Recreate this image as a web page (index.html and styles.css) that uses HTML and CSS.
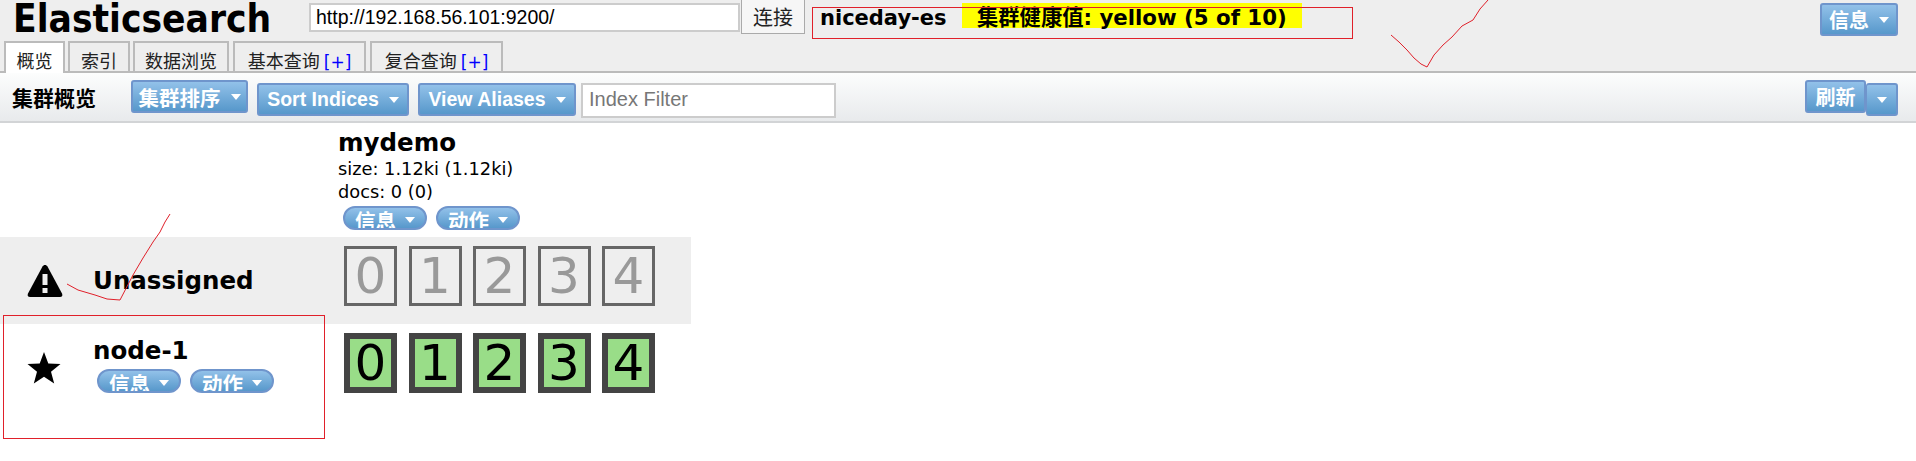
FILE: index.html
```html
<!DOCTYPE html>
<html lang="zh">
<head>
<meta charset="utf-8">
<title>Elasticsearch</title>
<link rel="stylesheet" href="styles.css">
</head>
<body>
<header class="top">
  <h1 class="brand">Elasticsearch</h1>
  <input class="url" value="http://192.168.56.101:9200/">
  <button class="connect">连接</button>
  <span class="cluster-name">niceday-es</span>
  <span class="health">集群健康值: yellow (5 of 10)</span>
  <button class="btn info-top">信息<i class="caret"></i></button>
</header>
<nav class="tabs">
  <span class="tab tab-active t1">概览</span>
  <span class="tab t2">索引</span>
  <span class="tab t3">数据浏览</span>
  <span class="tab t4">基本查询 <b class="plus">[+]</b></span>
  <span class="tab t5">复合查询 <b class="plus">[+]</b></span>
</nav>
<section class="toolbar">
  <strong class="tool-title">集群概览</strong>
  <button class="btn sort pressed">集群排序<i class="caret"></i></button>
  <button class="btn indices">Sort Indices<i class="caret"></i></button>
  <button class="btn aliases">View Aliases<i class="caret"></i></button>
  <input class="filter" placeholder="Index Filter">
  <span class="spring"></span>
  <button class="btn refresh pressed">刷新</button>
  <button class="btn refresh-more"><i class="caret"></i></button>
</section>
<main class="overview">
  <div class="row head-row">
    <div class="side"></div>
    <div class="index">
      <h2 class="index-name">mydemo</h2>
      <div class="stat">size: 1.12ki (1.12ki)</div>
      <div class="stat">docs: 0 (0)</div>
      <div class="pills">
        <span class="pill">信息<i class="caret"></i></span>
        <span class="pill">动作<i class="caret"></i></span>
      </div>
    </div>
  </div>
  <div class="row grey-row">
    <div class="side side-center">
      <svg class="icon warn" viewBox="0 0 36 34"><path d="M18 1c1 0 2 .6 2.500 1.500l14.500 27c1 2 0 3.500-2 3.500H3c-2 0-3-1.500-2-3.500l14.500-27C16 1.600 17 1 18 1z" fill="#000"/><rect x="15.500" y="10" width="5" height="11" fill="#eee"/><rect x="15.500" y="24" width="5" height="5" fill="#eee"/></svg>
      <span class="node-name">Unassigned</span>
    </div>
    <div class="shards">
      <span class="shard replica">0</span><span class="shard replica">1</span><span class="shard replica">2</span><span class="shard replica">3</span><span class="shard replica">4</span>
    </div>
  </div>
  <div class="row node-row">
    <div class="side side-node">
      <svg class="icon star" viewBox="0 0 34 32"><path d="M17 0l4.300 11.400 12.200.6-9.500 7.700 3.200 11.800L17 24.800 6.800 31.500 10 19.700.5 12l12.200-.6z" fill="#000"/></svg>
      <div class="node-info">
        <span class="node-name">node-1</span>
        <div class="pills node-pills">
          <span class="pill">信息<i class="caret"></i></span>
          <span class="pill">动作<i class="caret"></i></span>
        </div>
      </div>
    </div>
    <div class="shards">
      <span class="shard primary">0</span><span class="shard primary">1</span><span class="shard primary">2</span><span class="shard primary">3</span><span class="shard primary">4</span>
    </div>
  </div>
</main>
<svg class="marks" viewBox="0 0 1916 461" width="1916" height="461">
  <rect class="mark" x="812.500" y="7.500" width="540" height="31"/>
  <rect class="mark" x="3.500" y="315.500" width="321" height="123"/>
  <polyline class="mark" points="1391,35 1399,42 1407,50 1414,58 1421,64 1427,67 1434,55 1443,45 1452,37 1462,26 1473,20 1480,9 1488,0"/>
  <polyline class="mark" points="67,284 78,290 95,295 107,299 120,300 133,275 143,258 153,242 160,232 165,222 170,214"/>
</svg>
</body>
</html>
```
FILE: styles.css
```css
* { box-sizing: border-box; }
html, body { margin: 0; padding: 0; }
body {
  position: relative;
  width: 1916px;
  height: 461px;
  overflow: hidden;
  background: #fff;
  color: #000;
  font-family: "DejaVu Sans", "Noto Sans CJK SC", sans-serif;
}
.top {
  display: flex;
  align-items: flex-start;
  height: 41px;
  background: #eee;
}
.brand {
  margin: 0 0 0 13px;
  width: 296px;
  font-size: 38.500px;
  line-height: 37px;
  font-weight: 700;
  font-family: "DejaVu Sans", sans-serif;
  font-stretch: condensed;
  white-space: nowrap;
}
.url {
  width: 431px;
  height: 29px;
  margin-top: 3px;
  padding: 0 5px;
  border: 2px solid #ccc;
  background: #fff;
  font: 19.500px "Liberation Sans", sans-serif;
  color: #000;
}
.connect {
  width: 64px;
  height: 34px;
  margin-left: 1px;
  padding: 0;
  border: 1px solid #aaa;
  border-top: 0;
  background: #f6f6f6;
  font: 20px "Noto Sans CJK SC", sans-serif;
  color: #222;
}
.cluster-name {
  margin-left: 15px;
  width: 142px;
  font-size: 21px;
  line-height: 28px;
  margin-top: 4px;
  font-weight: 700;
  white-space: nowrap;
}
.health {
  width: 340px;
  height: 25px;
  margin-top: 3px;
  padding-left: 15px;
  background: #ff0;
  font-size: 21.300px;
  line-height: 29px;
  font-weight: 700;
  white-space: nowrap;
}
.btn {
  display: flex;
  align-items: center;
  justify-content: center;
  gap: 10px;
  height: 33px;
  padding: 0;
  border: 2px solid #6f95cc;
  border-radius: 3px;
  background: linear-gradient(#92c1e9, #5798cb);
  color: #fff;
  font: 700 20px "Liberation Sans", "Noto Sans CJK SC", sans-serif;
}
.caret {
  display: inline-block;
  width: 0;
  height: 0;
  border: 5px solid transparent;
  border-top: 6px solid #fff;
  border-bottom: 0;
}
.info-top {
  width: 78px;
  margin: 3px 18px 0 auto;
}
.tabs {
  display: flex;
  height: 32px;
  background: #eee;
  border-bottom: 2px solid #bbb;
}
.tab {
  display: block;
  height: 30px;
  border: 2px solid #bbb;
  border-bottom: 0;
  background: #eee;
  text-align: center;
  font: 18px/35px "Noto Sans CJK SC", sans-serif;
  white-space: nowrap;
  color: #222;
}
.tab-active { background: #fff; height: 32px; position: relative; }
.t1 { width: 61px; margin-left: 4px; }
.t2 { width: 62px; margin-left: 3px; }
.t3 { width: 96px; margin-left: 3px; }
.t4 { width: 133px; margin-left: 4px; }
.t5 { width: 133px; margin-left: 4px; }
.plus { color: #00f; font-weight: 400; font-family: "DejaVu Sans", sans-serif; font-size: 17px; }
.toolbar {
  display: flex;
  align-items: flex-start;
  height: 50px;
  padding-top: 7px;
  background: linear-gradient(#fcfdfd, #e8eaec);
  border-bottom: 2px solid #d2d4d6;
}
.tool-title {
  width: 119px;
  margin-left: 12px;
  font: 700 21px/34px "Noto Sans CJK SC", sans-serif;
}
.sort { width: 117px; font-size: 20.500px; }
.indices { width: 152px; margin: 3px 0 0 9px; font-size: 19.500px; }
.aliases { width: 158px; margin: 3px 0 0 9px; font-size: 19.500px; }
.filter {
  width: 255px;
  height: 35px;
  margin: 3px 0 0 5px;
  padding: 0 0 3px 6px;
  border: 2px solid #ccc;
  background: #fff;
  font: 20px "Liberation Sans", sans-serif;
}
.filter::placeholder { color: #777; opacity: 1; }
.spring { flex: 1; }
.refresh { width: 61px; }
.refresh-more { width: 32px; margin: 3px 18px 0 0; border-left-width: 1px; }
.overview { display: flex; flex-direction: column; }
.row { display: flex; width: 691px; }
.head-row { height: 114px; }
.grey-row { height: 87px; background: #eee; padding-top: 9px; }
.node-row { height: 120px; padding-top: 9px; }
.side { width: 344px; flex: none; }
.side-center { display: flex; align-items: center; height: 60px; padding: 0 0 0 27px; margin-top: 5px; }
.side-node { display: flex; }
.index { margin-left: -5px; }
.index-name {
  margin: 6px 0 0 -1px;
  font-size: 24.500px;
  line-height: 28px;
  font-weight: 700;
}
.stat { font-size: 17.800px; line-height: 23px; margin-left: -1px; }
.pills { display: flex; gap: 9px; margin: 3px 0 0 4px; }
.pill {
  display: flex;
  justify-content: center;
  gap: 9px;
  width: 84px;
  height: 24px;
  overflow: hidden;
  border: 2px solid #6f95cc;
  border-radius: 12px;
  background: linear-gradient(#92c1e9, #5798cb);
  color: #fff;
  font: 700 20.500px/25px "Noto Sans CJK SC", sans-serif;
}
.pill .caret { margin-top: 9px; flex: none; }
.icon { flex: none; }
.warn { width: 36px; height: 34px; margin-right: 30px; }
.star { width: 34px; height: 32px; margin: 19px 32px 0 27px; }
.node-name { font-size: 24.500px; line-height: 30px; font-weight: 700; white-space: nowrap; }
.node-info { display: flex; flex-direction: column; margin-top: 3px; }
.node-pills { margin: 3px 0 0 4px; }
.shards { display: flex; gap: 11.500px; height: 60px; }
.shard {
  display: block;
  width: 53px;
  height: 60px;
  text-align: center;
  font-size: 50px;
  line-height: 54px;
  font-family: "DejaVu Sans", sans-serif;
}
.replica { border: 3px solid #666; color: #999; }
.primary { border: 6px solid #444; background: #99dd88; line-height: 48px; }
.marks { position: absolute; left: 0; top: 0; pointer-events: none; }
.mark { fill: none; stroke: #e0202a; stroke-width: 1; }
```
